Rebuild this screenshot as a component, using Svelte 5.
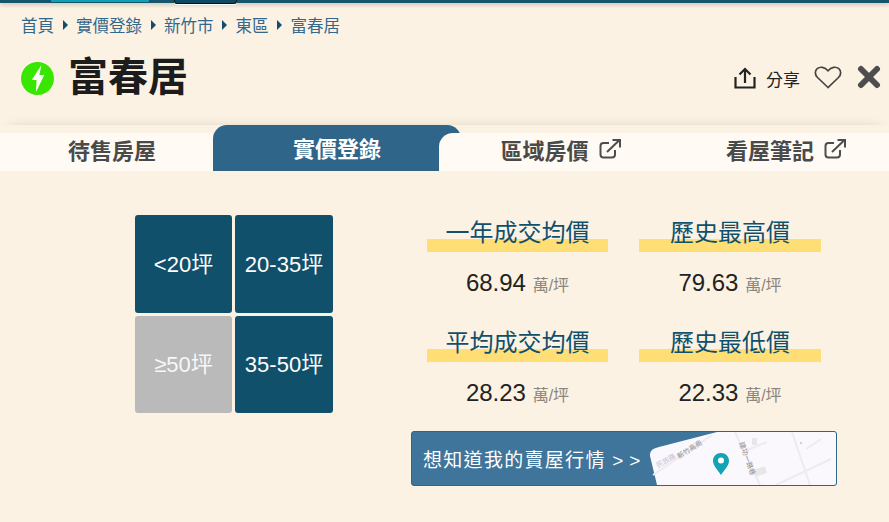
<script>
	const crumbs = ['首頁', '實價登錄', '新竹市', '東區', '富春居'];
	const sizes = [
		{ label: '<20坪', off: false },
		{ label: '20-35坪', off: false },
		{ label: '≥50坪', off: true },
		{ label: '35-50坪', off: false }
	];
	const stats = [
		{ title: '一年成交均價', value: '68.94' },
		{ title: '歷史最高價', value: '79.63' },
		{ title: '平均成交均價', value: '28.23' },
		{ title: '歷史最低價', value: '22.33' }
	];
</script>

<div class="page">
	<div class="topbar">
		<span class="top-teal"></span>
		<span class="top-dark"></span>
	</div>

	<nav class="crumbs">
		{#each crumbs as crumb, i}
			{#if i > 0}<span class="arrow"></span>{/if}
			<span>{crumb}</span>
		{/each}
	</nav>

	<header class="head">
		<div class="amp">
			<svg viewBox="0 0 33 33" width="33" height="33">
				<circle cx="16.5" cy="16.5" r="16.5" fill="#38e600" />
				<path d="M20.500 3 10.700 18h4.800L15 30l8.300-17h-5z" fill="#fff" />
			</svg>
		</div>
		<h1>富春居</h1>
		<div class="actions">
			<svg class="share-icon" viewBox="0 0 22 22" width="22" height="22" fill="none" stroke="#222" stroke-width="2.2">
				<path d="M1.500 10v10.500h19V10" />
				<path d="M11 16V2.500M5.500 7.500 11 2l5.500 5.500" />
			</svg>
			<span class="share">分享</span>
			<svg class="heart" viewBox="0 0 28 23" width="28" height="23" fill="none" stroke="#444" stroke-width="1.7">
				<path d="M14 21.500 3.500 11.500C.7 8.800.7 4.800 3.200 2.700 6 .4 10.600.7 14 4.800c3.400-4.100 8-4.400 10.800-2.100 2.500 2.100 2.500 6.100-.3 8.800z" />
			</svg>
			<svg class="close" viewBox="0 0 24 24" width="24" height="24" fill="none" stroke="#4d4d4d" stroke-width="6" stroke-linecap="round">
				<path d="M4 4l16 16M20 4 4 20" />
			</svg>
		</div>
	</header>

	<div class="tabs">
		<div class="tab first">待售房屋</div>
		<div class="tab active">實價登錄</div>
		<div class="tab third">
			區域房價
			<svg viewBox="0 0 22 20" width="22" height="20" fill="none" stroke="#4d4d4d" stroke-width="2">
				<path d="M16 11v4.500a3 3 0 0 1-3 3H4.500a3 3 0 0 1-3-3V7a3 3 0 0 1 3-3H10" />
				<path d="M8 13 20 1.500M13.500 1H21v7.500" />
			</svg>
		</div>
		<div class="tab fourth">
			看屋筆記
			<svg viewBox="0 0 22 20" width="22" height="20" fill="none" stroke="#4d4d4d" stroke-width="2">
				<path d="M16 11v4.500a3 3 0 0 1-3 3H4.500a3 3 0 0 1-3-3V7a3 3 0 0 1 3-3H10" />
				<path d="M8 13 20 1.500M13.500 1H21v7.500" />
			</svg>
		</div>
	</div>

	<main class="content">
		<div class="size-grid">
			{#each sizes as size}
				<button class="size" class:off={size.off}>{size.label}</button>
			{/each}
		</div>

		<div class="right">
			<div class="stats">
				{#each stats as stat}
					<div class="stat">
						<div class="stat-title"><span>{stat.title}</span></div>
						<div class="stat-value">{stat.value} <small>萬/坪</small></div>
					</div>
				{/each}
			</div>

			<div class="banner">
				<span class="banner-text">想知道我的賣屋行情 <span class="chev">&gt; &gt;</span></span>
				<svg class="map" viewBox="0 0 188 53" width="188" height="53">
					<path d="M11 15Q1 17 2 24L9 53H188V0H69z" fill="#faf8fc" />
					<g fill="none" stroke="#eeeaee" stroke-width="2">
						<path d="M5 43 64 3M87 0l25 53M144 0l18 53M99 18l20-8M158 17l15-10M128 53l55-26" />
					</g>
					<rect x="104" y="6" width="5" height="7" fill="#e8e6e6" />
					<rect x="107" y="36" width="11" height="7" fill="#e8e6e6" transform="rotate(-18 112 39)" />
					<circle cx="153" cy="11" r="1" fill="#eeb98a" />
					<text class="map-label" transform="translate(10 36) rotate(-30)">民族路</text>
					<text class="map-label dark" transform="translate(31 27) rotate(-32)">新竹高商</text>
					<text class="map-label dark" transform="translate(91 11) rotate(70)">建功一路巷</text>
					<path d="M73 21c-4.600 0-8 3.500-8 8 0 5 5 9 8 14 3-5 8-9 8-14 0-4.500-3.400-8-8-8z" fill="#14a3b5" />
					<circle cx="73" cy="28.500" r="3" fill="#fff" />
				</svg>
			</div>
		</div>
	</main>
</div>

<style>
	:global(body) {
		margin: 0;
		background: #fbf2e3;
	}

	.page {
		width: 889px;
		height: 522px;
		overflow: hidden;
		background: #fbf2e3;
		color: #222;
		font-family: 'Liberation Sans', 'Noto Sans CJK TC', sans-serif;
	}

	.topbar {
		height: 3px;
		background: #15566e;
		box-shadow: 0 1px 5px rgba(0, 0, 0, 0.3);
		display: flex;
		padding-left: 51px;
	}

	.top-teal {
		width: 98px;
		height: 2px;
		background: #12a0b3;
	}

	.top-dark {
		width: 61px;
		height: 3px;
		margin-left: 25px;
		background: #10495f;
		border: 1px solid #111;
		border-top: 0;
		box-shadow: 0 1px 0 #fff;
		border-radius: 0 0 3px 3px;
	}

	.crumbs {
		display: flex;
		align-items: center;
		margin: 11px 0 0 21px;
		height: 22px;
		font-size: 16.500px;
		color: #33688c;
	}

	.arrow {
		width: 0;
		height: 0;
		margin: 0 8.500px;
		border-left: 5px solid #0f4f6b;
		border-top: 5px solid transparent;
		border-bottom: 5px solid transparent;
	}

	.head {
		display: flex;
		align-items: center;
		height: 56px;
		margin-top: 13px;
		padding: 0 8px 0 21px;
	}

	.amp {
		display: flex;
		margin-top: 2px;
	}

	h1 {
		margin: 0 0 0 14px;
		font-size: 40px;
		font-weight: 700;
		line-height: 56px;
		color: #1c1c1c;
	}

	.actions {
		display: flex;
		align-items: center;
		margin-left: auto;
	}

	.share-icon {
		margin-top: 2px;
	}

	.share {
		margin: 2px 14px 0 10px;
		font-size: 17px;
		color: #222;
	}

	.close {
		margin-left: 15px;
	}

	.tabs {
		display: flex;
		height: 46px;
		margin-top: 20px;
		align-items: flex-end;
		box-shadow: 0 -8px 12px -10px rgba(90, 70, 40, 0.2);
	}

	.tab {
		height: 38px;
		display: flex;
		align-items: center;
		justify-content: center;
		gap: 10px;
		font-size: 22px;
		font-weight: 700;
		color: #4a4a4a;
		background: #fffaf4;
		box-sizing: border-box;
		padding-bottom: 6px;
	}

	.first {
		width: 213px;
		padding-left: 11px;
	}

	.active {
		width: 248px;
		height: 46px;
		margin-right: -22px;
		padding-bottom: 2px;
		background: #2f6589;
		color: #fff;
		border-radius: 14px 14px 0 0;
	}

	.third {
		position: relative;
		width: 226px;
		padding-left: 17px;
		border-radius: 14px 0 0 0;
	}

	.fourth {
		flex: 1;
		padding-left: 18px;
	}

	.content {
		display: flex;
		padding: 44px 0 0 135px;
	}

	.size-grid {
		display: grid;
		grid-template-columns: 97px 98px;
		grid-template-rows: 98px 97px;
		gap: 3px;
		width: 198px;
		height: 198px;
	}

	.size {
		padding: 0 0 5px;
		border: 0;
		border-radius: 3px;
		background: #10506b;
		color: #fff;
		font: inherit;
		font-size: 22px;
	}

	.size.off {
		background: #bababa;
		color: #f7f7f7;
	}

	.right {
		width: 426px;
		margin-left: 78px;
	}

	.stats {
		display: grid;
		grid-template-columns: 181px 182px;
		column-gap: 31px;
		row-gap: 19px;
		padding-left: 16px;
	}

	.stat {
		height: 91px;
		text-align: center;
	}

	.stat-title {
		height: 37px;
		font-size: 24px;
		line-height: 35px;
		color: #10506b;
		background: linear-gradient(#ffde76, #ffde76) 0 100% / 100% 13px no-repeat;
	}

	.stat-value {
		margin-top: 16px;
		font-size: 24px;
		line-height: 30px;
		color: #222;
	}

	.stat-value small {
		font-size: 16px;
		color: #8a8580;
	}

	.banner {
		position: relative;
		display: flex;
		align-items: center;
		height: 55px;
		margin-top: 15px;
		padding-left: 11px;
		box-sizing: border-box;
		overflow: hidden;
		border: 1px solid #2f6589;
		border-radius: 3px;
		background: #3f759b;
		color: #fff;
		font-size: 19px;
		letter-spacing: 1.300px;
	}

	.banner-text {
		white-space: nowrap;
	}

	.chev {
		letter-spacing: 0.300px;
	}

	.map {
		position: absolute;
		right: 0;
		top: 0;
	}

	.map-label {
		font-size: 7px;
		letter-spacing: 0;
		fill: #cbbcd6;
	}

	.map-label.dark {
		fill: #8f8d93;
	}
</style>
